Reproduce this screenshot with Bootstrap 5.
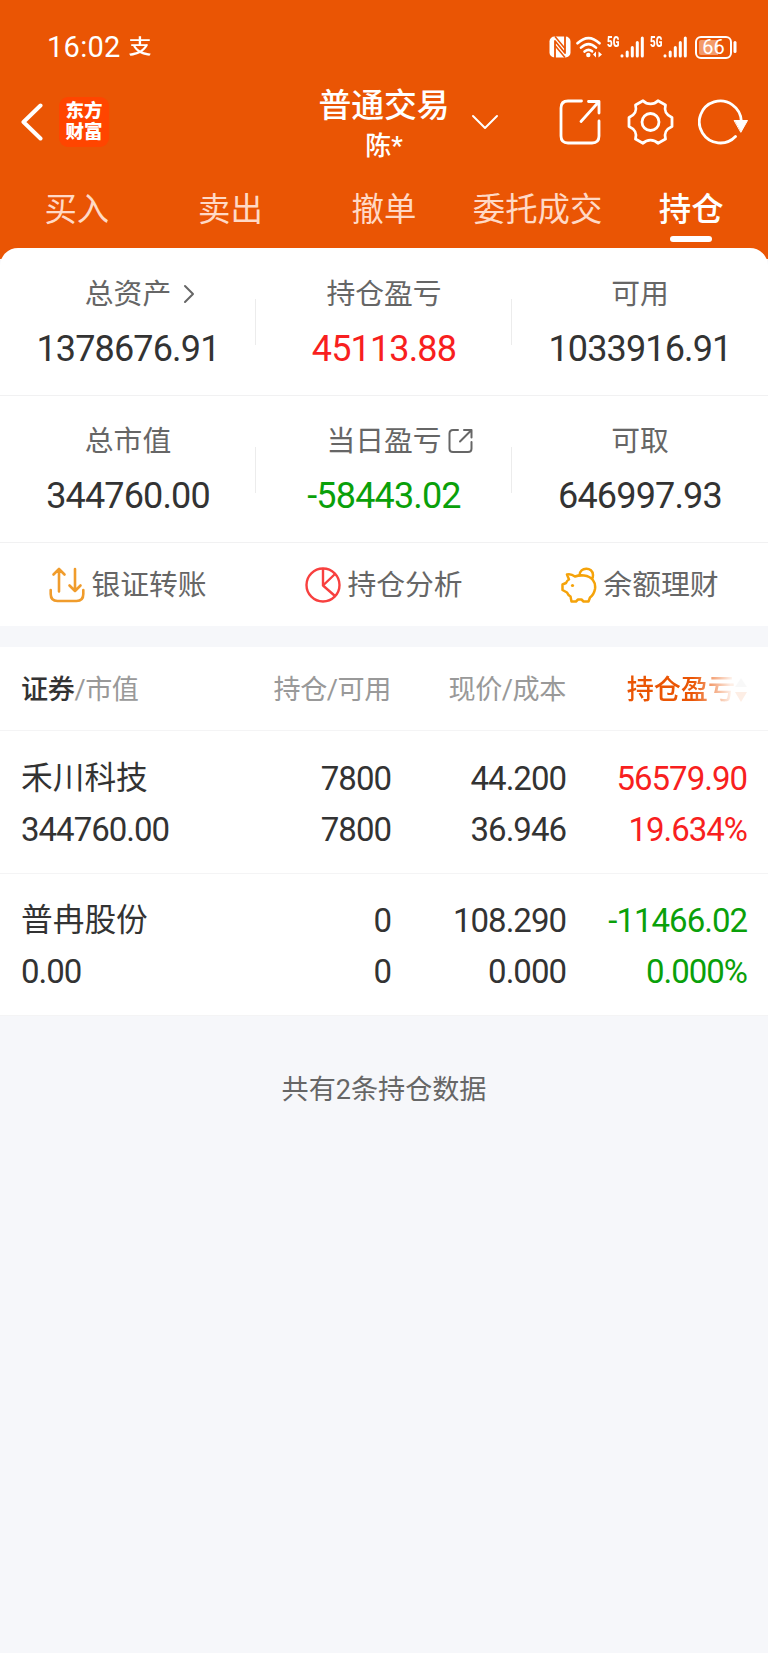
<!DOCTYPE html>
<html lang="zh-CN">
<head>
<meta charset="utf-8">
<meta name="viewport" content="width=device-width, initial-scale=1">
<title>持仓</title>
<link rel="stylesheet" href="https://cdn.jsdelivr.net/npm/bootstrap@5.3.0/dist/css/bootstrap.min.css">
<style>
body{font-family:Roboto,"Noto Sans CJK SC",sans-serif;background:#f6f7fa;color:#333;min-height:1653px;line-height:1;overflow-x:hidden}
svg{display:block;flex:none;fill:none;stroke-linecap:round;stroke-linejoin:round}
.top{background:#ea5504;color:#fff;height:259px}
.status{height:72px;padding:22px 31px 0 47px}
.clock{font-size:29px;letter-spacing:.3px}
.pay{font-size:20px;font-weight:500;width:22px;transform:scaleX(1.15)}
.fiveg{font-size:14px;font-weight:900;width:13px;transform:scaleX(.7);transform-origin:0 0;margin-bottom:11px}
.batt{width:37px;height:23px;border:2px solid #fff;border-radius:6px;font-size:20px;background:linear-gradient(90deg,#f39a69 66%,transparent 66%) content-box;padding:2px}
.bar-title{height:100px;padding:0 20px 0 21px}
.logo{width:50px;height:50px;border-radius:9px;background:#ff4500;font-size:18.5px;font-weight:900;line-height:21px}
.ttl{font-size:32.8px;font-weight:500;line-height:38px}
.sub{font-size:26px;font-weight:500;line-height:36px;margin-top:3px}
.tabs{height:76px}
.tabs .tab{font-size:32.4px;color:#ffd9c6;width:20%;padding-top:17px;line-height:42px}
.tabs .on{color:#fff;font-weight:500}
.tabs .on::after{content:"";display:block;width:42px;height:6px;border-radius:3px;background:#fff;margin:5px auto 0}
.sheet{background:#fff;border-radius:18px 18px 0 0;margin-top:-11px}
.sums{border-bottom:1.5px solid #f1f1f2}
.cell3{width:33.3333%;height:146.5px;padding-top:27.5px}
.cell3+.cell3::before{content:"";position:absolute;left:-.5px;top:51px;height:46px;width:1px;background:#ececec}
.lbl{font-size:28.8px;line-height:36px;color:#666}
.lbl svg{position:absolute;top:50%;transform:translateY(-50%)}
.val{font-size:36px;line-height:42px;margin-top:16px;letter-spacing:-.85px}
.up{color:#f81f20}.down{color:#0aa00a}
.acts{height:83px;font-size:28.8px;color:#666}
.acts div{width:33.3333%;gap:6px}
.acts span{padding-top:2px}
.hold{background:#fff;margin-top:21px}
.hrow{display:grid;grid-template-columns:1fr 174px 175px 181px;padding:0 21px;border-bottom:1.5px solid #f4f4f5;text-align:right}
.hrow>:first-child{text-align:left}
.hhead{height:84px;line-height:86px;font-size:27.1px;color:#999}
.hhead>div:not(.sorter){letter-spacing:-.4px}
.hitem{height:142.6px;padding-top:21.5px;font-size:33px;line-height:51px;letter-spacing:-1px}
.cn{display:block;height:51px;font-size:31.7px;letter-spacing:0}
.sorter{color:#ea5504;-webkit-mask:linear-gradient(90deg,#000 70%,rgba(0,0,0,.1) 91%)}
.foot{font-size:27.1px;color:#666;line-height:36px;padding-top:56px}
</style>
</head>
<body>
<header class="top">
  <div class="status d-flex align-items-center">
    <span class="clock">16:02</span><span class="pay ms-2 text-center">支</span>
    <div class="d-flex align-items-center ms-auto">
      <svg width="22" height="22" viewBox="0 0 22 22"><rect x=".5" y=".5" width="21" height="21" rx="5" fill="#fff"/><path d="M6 22V5L16 17V0" stroke="#ea5504" stroke-width="1.800" stroke-linecap="butt"/><path d="M6 .5L16 12.500M6 9.500L16 21.500" stroke="#ea5504" stroke-width="1.500" stroke-linecap="butt"/></svg>
      <svg class="ms-1" width="28" height="22" viewBox="0 0 28 22" stroke="#fff" stroke-width="2.600"><path d="M2.500 7.300Q13.500-3.200 24.500 7.300M6 11.600Q13.500 4.800 21 11.600M9.600 15.600Q13.500 12.200 17 15.300"/><circle cx="13.300" cy="19" r="2.200" fill="#fff" stroke="none"/><path d="M18 18.500L21 15.500V21.500ZM27 18.500L23.500 15.500V21.500Z" fill="#fff" stroke="none"/></svg>
      <span class="fiveg ms-1">5G</span>
      <svg width="24" height="22" viewBox="0 0 24 22" stroke="#fff" stroke-width="3"><path d="M2 19.800v.1M7.200 16v4M12.300 11.500v8.500M17.300 6.500v13.500M22.300 2v18"/></svg>
      <span class="fiveg" style="margin-left:6px">5G</span>
      <svg width="24" height="22" viewBox="0 0 24 22" stroke="#fff" stroke-width="3"><path d="M2 19.800v.1M7.200 16v4M12.300 11.500v8.500M17.300 6.500v13.500M22.300 2v18"/></svg>
      <span class="batt d-flex align-items-center justify-content-center ms-2">66</span>
      <svg width="5" height="14" viewBox="0 0 5 14" stroke="#fff" stroke-width="3"><path d="M3 2.500v9"/></svg>
    </div>
  </div>
  <div class="bar-title d-flex align-items-center position-relative">
    <svg width="22" height="38" viewBox="0 0 22 38" stroke="#fff" stroke-width="4"><path d="M19.500 2.500L2.500 19L19.500 35.500"/></svg>
    <div class="logo text-center ms-3 d-flex flex-column justify-content-center"><span>东方</span><span>财富</span></div>
    <div class="position-absolute start-50 translate-middle-x text-center pb-1" style="top:15px">
      <div class="ttl">普通交易</div><div class="sub">陈*</div>
    </div>
    <svg class="ms-auto" width="28" height="16" viewBox="0 0 28 16" stroke="#fff" stroke-width="2"><path d="M2 2L14 14L26 2"/></svg>
    <svg style="margin-left:60px" width="42" height="46" viewBox="0 0 42 46" stroke="#fff" stroke-width="2.800"><path d="M22.500 2H9Q2 2 2 9V37Q2 44 9 44H33Q40 44 40 37V22M29.500 2.500H40V14M40 2.500L22 22.500"/></svg>
    <svg style="margin-left:26px" width="47" height="46" viewBox="0 0 47 46" stroke="#fff" stroke-width="2.800"><circle cx="23.500" cy="23" r="8.500"/><path d="M16 1.800C20 6 27 6 31 1.800L38.500 6C37 12 38.500 15.500 45 18.500V27.500C38.500 30.500 37 34 38.500 40L31 44.200C27 40 20 40 16 44.200L8.500 40C10 34 8.500 30.500 2 27.500V18.500C8.500 15.500 10 12 8.500 6Z"/></svg>
    <svg style="margin-left:24px" width="50" height="46" viewBox="0 0 50 46" stroke="#fff" stroke-width="2.800"><path d="M37.500 37.500A21 21 0 1 1 43.300 22"/><path d="M36.500 21.500H49.500L43 33Z" fill="#fff" stroke-width="1"/></svg>
  </div>
  <nav class="tabs d-flex text-center">
    <div class="tab">买入</div><div class="tab">卖出</div><div class="tab">撤单</div><div class="tab">委托成交</div><div class="tab on">持仓</div>
  </nav>
</header>
<main>
  <section class="sheet">
    <div class="sums d-flex text-center">
      <div class="cell3 position-relative"><div class="lbl"><span class="position-relative">总资产<svg style="left:98px" width="12" height="20" viewBox="0 0 12 20" stroke="#666" stroke-width="2"><path d="M2 2L10 10L2 18"/></svg></span></div><div class="val">1378676.91</div></div>
      <div class="cell3 position-relative"><div class="lbl">持仓盈亏</div><div class="val up">45113.88</div></div>
      <div class="cell3 position-relative"><div class="lbl">可用</div><div class="val">1033916.91</div></div>
    </div>
    <div class="sums d-flex text-center">
      <div class="cell3 position-relative"><div class="lbl">总市值</div><div class="val">344760.00</div></div>
      <div class="cell3 position-relative"><div class="lbl"><span class="position-relative">当日盈亏<svg style="left:122px" width="25" height="25" viewBox="0 0 25 25" stroke="#666" stroke-width="2"><path d="M10 1.500H5Q1.500 1.500 1.500 5V20Q1.500 23.500 5 23.500H20Q23.500 23.500 23.500 20V13.500M16 1.500H23.500V9M23.500 1.500L12 13"/></svg></span></div><div class="val down">-58443.02</div></div>
      <div class="cell3 position-relative"><div class="lbl">可取</div><div class="val">646997.93</div></div>
    </div>
    <div class="acts d-flex">
      <div class="d-flex align-items-center justify-content-center"><svg width="36" height="36" viewBox="0 0 36 36" stroke="#f09c2c" stroke-width="2.600"><path d="M1.700 23V27Q1.700 34 8.500 34H27.500Q34.300 34 34.300 27V23M10 24.500V2M4.500 7.500L10 2L15.500 7.500M26 2V24M20.500 18.500L26 24L31.500 18.500"/></svg><span>银证转账</span></div>
      <div class="d-flex align-items-center justify-content-center"><svg width="36" height="36" viewBox="0 0 36 36" stroke="#f8403f" stroke-width="2.400"><circle cx="18" cy="18" r="16.500"/><path d="M18 2V18.500L30 7M18 18.500L30 29"/></svg><span>持仓分析</span></div>
      <div class="d-flex align-items-center justify-content-center"><svg width="36" height="36" viewBox="0 0 36 36" stroke="#f5a30a" stroke-width="2.500"><path d="M6 7.500Q10 6.500 14 9.500Q18 8 23 8.500C31 9.500 35 15 34 22Q33 27.500 29 30.500L27.500 34.500H22.500L20.500 32.500H17L15 34.500H10.500L9.500 29.500Q7 28 6 25.500L1.500 23V17.500L5 16Q6 13.500 8 12.500ZM18.500 8.500C18.500-.5 32-.5 32 8Q32 10.500 31 12"/><circle cx="11.500" cy="18.500" r="1.600" fill="#f5a30a" stroke="none"/></svg><span>余额理财</span></div>
    </div>
  </section>
  <section class="hold">
    <div class="hrow hhead"><div><span style="color:#333;font-weight:500">证券</span>/市值</div><div>持仓/可用</div><div>现价/成本</div>
      <div class="sorter d-flex justify-content-end align-items-center fw-medium">持仓盈亏<svg width="12" height="26" viewBox="0 0 12 26"><path d="M0 10L6 1L12 10Z" fill="#bbb"/><path d="M0 15L6 25L12 15Z" fill="#ea5504"/></svg></div></div>
    <div class="hrow hitem"><div><span class="cn">禾川科技</span>344760.00</div><div>7800<br>7800</div><div>44.200<br>36.946</div><div class="up">56579.90<br>19.634%</div></div>
    <div class="hrow hitem"><div><span class="cn">普冉股份</span>0.00</div><div>0<br>0</div><div>108.290<br>0.000</div><div class="down">-11466.02<br>0.000%</div></div>
  </section>
  <div class="foot text-center">共有2条持仓数据</div>
</main>
<script src="https://cdn.jsdelivr.net/npm/bootstrap@5.3.0/dist/js/bootstrap.bundle.min.js"></script>
</body>
</html>
